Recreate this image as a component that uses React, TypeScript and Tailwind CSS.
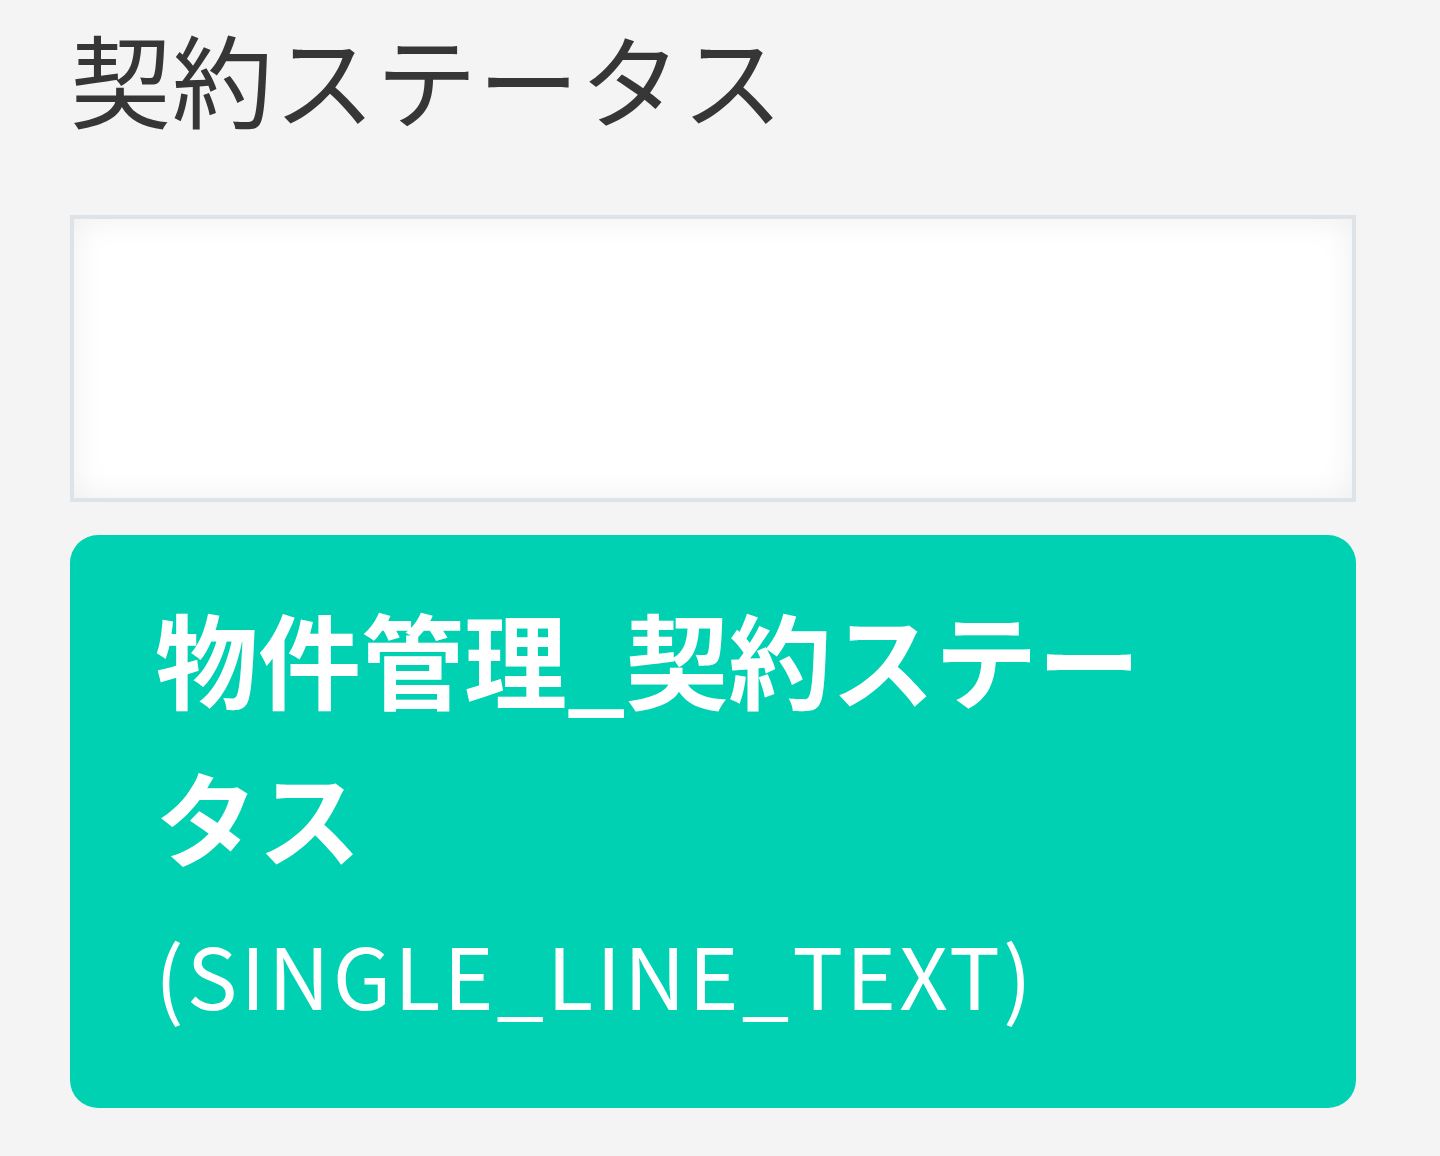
import React from 'react'

const font = { fontFamily: '"Noto Sans CJK JP", "Noto Sans", sans-serif' }

function FieldCard() {
  return (
    <div className="mt-[33px] h-[573px] rounded-[28px] bg-[#00d1b2] px-[85px] pt-[44px] text-white">
      <div className="max-w-[1030px] text-[103px] font-bold leading-[158px]">物件管理_契約ステータス</div>
      <div className="mt-[14px] text-[85px] leading-[127px] tracking-[3px]">(SINGLE_LINE_TEXT)</div>
    </div>
  )
}

export default function App() {
  return (
    <div className="w-[1440px] h-[1156px] bg-[#f4f4f4] pl-[70px] pr-[84px] pt-[2px]" style={font}>
      <div className="text-[101px] leading-[150px] text-[#363636] tracking-[1px]">契約ステータス</div>
      <div className="mt-[63px] h-[287px] border-[4px] border-[#dde3e6] bg-white shadow-[inset_0_0_32px_rgba(0,0,0,0.07)]" />
      <FieldCard />
    </div>
  )
}
